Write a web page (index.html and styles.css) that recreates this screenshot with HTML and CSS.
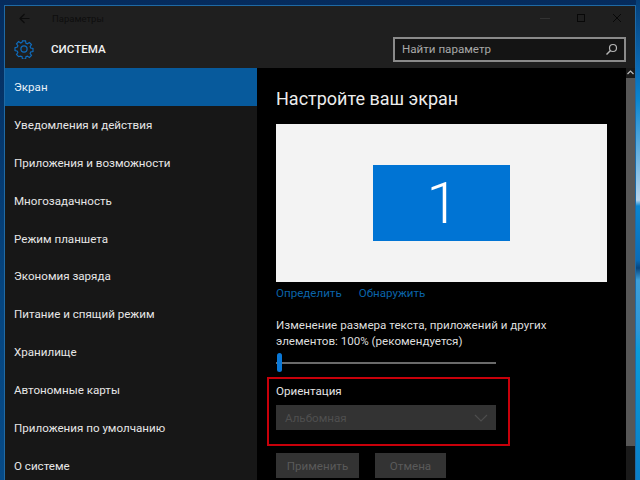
FILE: index.html
```html
<!DOCTYPE html>
<html lang="ru">
<head>
<meta charset="utf-8">
<title>Параметры</title>
<link rel="stylesheet" href="styles.css">
</head>
<body>
<div class="window">
  <div class="titlebar">
    <svg class="back" width="11" height="11" viewBox="0 0 11 11"><path d="M10.500 5.500H1M5.500 1 1 5.500 5.500 10" fill="none" stroke="#0c0c0c" stroke-width="1.200"/></svg>
    <span class="title">Параметры</span>
    <div class="controls">
      <svg width="10" height="10" viewBox="0 0 10 10"><path d="M0 5.500h10" stroke="#333" stroke-width="1"/></svg>
      <svg width="10" height="10" viewBox="0 0 10 10"><rect x="1.500" y="1.500" width="7" height="7" fill="none" stroke="#080808" stroke-width="1"/></svg>
      <svg width="10" height="10" viewBox="0 0 10 10"><path d="M1 1l8 8M9 1l-8 8" stroke="#080808" stroke-width="1"/></svg>
    </div>
  </div>
  <div class="header">
    <svg class="gear" width="20" height="20" viewBox="0 0 20 20"><path d="M8.300 1h3.400l.5 2.700 1.500.7 2.300-1.500 2.300 2.400-1.500 2.200.6 1.500 2.600.6v3.300l-2.600.6-.6 1.500 1.500 2.200-2.300 2.300-2.300-1.500-1.500.7-.5 2.700H8.300l-.5-2.700-1.500-.7L4 18.500l-2.300-2.300 1.500-2.200-.6-1.500L0 11.900V8.600l2.600-.6.6-1.500-1.500-2.200L4 1.900l2.300 1.500 1.500-.7z" transform="translate(1 .9) scale(.9)" fill="none" stroke="#0f6cbd" stroke-width="1.300"/><circle cx="10" cy="10" r="3.100" fill="none" stroke="#0f6cbd" stroke-width="1.200"/></svg>
    <span class="heading">СИСТЕМА</span>
    <div class="search">
      <span>Найти параметр</span>
      <svg width="13" height="13" viewBox="0 0 13 13"><circle cx="8" cy="5" r="3.500" fill="none" stroke="#b5b5b5" stroke-width="1.200"/><path d="M5.500 7.500 1.500 11.500" stroke="#b5b5b5" stroke-width="1.400"/></svg>
    </div>
  </div>
  <div class="body">
    <nav class="sidebar">
      <a class="item active">Экран</a>
      <a class="item">Уведомления и действия</a>
      <a class="item">Приложения и возможности</a>
      <a class="item">Многозадачность</a>
      <a class="item">Режим планшета</a>
      <a class="item">Экономия заряда</a>
      <a class="item">Питание и спящий режим</a>
      <a class="item">Хранилище</a>
      <a class="item">Автономные карты</a>
      <a class="item">Приложения по умолчанию</a>
      <a class="item">О системе</a>
    </nav>
    <main class="content">
      <h1>Настройте ваш экран</h1>
      <div class="preview"><div class="monitor">1</div></div>
      <div class="links"><a>Определить</a><a>Обнаружить</a></div>
      <p class="scale">Изменение размера текста, приложений и других элементов: 100% (рекомендуется)</p>
      <div class="slider"><span class="thumb"></span></div>
      <div class="orientation">
        <div class="label">Ориентация</div>
        <div class="select">
          <span>Альбомная</span>
          <svg width="14" height="8" viewBox="0 0 14 8"><path d="M1 1l6 6 6-6" fill="none" stroke="#4d4d4d" stroke-width="1.200"/></svg>
        </div>
      </div>
      <div class="buttons"><span class="btn apply">Применить</span><span class="btn cancel">Отмена</span></div>
    </main>
    <div class="scrollbar">
      <svg width="9" height="10" viewBox="0 0 9 10"><path d="M1.500 6 4.500 3l3 3" fill="none" stroke="#bdbdbd" stroke-width="1.200"/></svg>
      <div class="scroll-thumb"></div>
    </div>
  </div>
</div>
</body>
</html>
```
FILE: styles.css
```css
* { box-sizing: border-box; }
html, body { margin: 0; height: 480px; overflow: hidden; }
body {
  padding: 5px 4px 0 4px;
  font-family: Roboto, "Noto Sans", sans-serif;
  background:
    linear-gradient(180deg, #063f78 0, #0a6cb8 70px, #0a86d0 100px, #b8d4ea 200px, #0a86d0 206px, #0a6cb8 260px, #07457e 268px, #3d9fd8 280px, #2d96d6 330px, #0a9bd8 350px, #0a7ec8 480px) right top / 4px 100% no-repeat,
    linear-gradient(180deg, #052b5c 0, #06457f 300px, #074a86 480px);
  background-color: #063a70;
}
.window {
  width: 632px;
  height: 490px;
  border: 1px solid #1f6aa5;
  background: #1a1a1a;
  display: flex;
  flex-direction: column;
}
.titlebar {
  height: 24px;
  flex: none;
  display: flex;
  align-items: center;
  padding-left: 14px;
  background: #1f1f1f;
}
.title { margin-left: 22px; font-size: 9.500px; color: #0e0e0e; }
.controls { margin-left: auto; display: flex; gap: 26px; padding-right: 13px; }
.header {
  height: 38px;
  flex: none;
  display: flex;
  align-items: center;
  padding: 0 9px 0 9px;
  background: #1f1f1f;
}
.heading { margin-left: 17px; font-size: 11.600px; font-weight: 500; color: #f2f2f2; }
.search {
  margin-left: auto;
  width: 233px;
  height: 25px;
  border: 2px solid #8a8a8a;
  background: #141414;
  display: flex;
  align-items: center;
  justify-content: space-between;
  padding: 0 6px 0 7px;
  font-size: 11.600px;
  color: #a8a8a8;
}
.body { flex: 1; display: flex; min-height: 0; }
.sidebar { width: 252px; flex: none; background: #171717; }
.item {
  display: flex;
  align-items: center;
  height: 37.900px;
  padding-left: 9px;
  font-size: 11.600px;
  color: #e6e6e6;
}
.active { background: #075a9c; color: #e8f0f7; }
.content { flex: 1; min-width: 0; background: #000; padding: 0 0 0 19px; }
h1 {
  margin: 19px 0 0;
  font-size: 18px;
  font-weight: 400;
  line-height: 23px;
  color: #ececec;
}
.preview {
  margin-top: 14px;
  width: 331px;
  height: 158px;
  background: #f3f3f3;
  display: flex;
  align-items: center;
  justify-content: center;
}
.monitor {
  width: 137px;
  height: 76px;
  margin-bottom: 1px;
  padding-left: 2px;
  background: #0074d4;
  color: #fff;
  display: flex;
  align-items: center;
  justify-content: center;
  font-family: Roboto, sans-serif;
  font-weight: 300;
  font-size: 58px;
}
.links { display: flex; gap: 17px; margin-top: 2px; height: 18px; line-height: 18px; font-size: 11.600px; color: #0a63a8; }
.scale { margin: 15px 0 0; width: 280px; font-size: 11.600px; line-height: 16px; color: #dedede; }
.slider { position: relative; margin-top: 13px; width: 220px; height: 2px; background: #6a6a6a; }
.thumb { position: absolute; left: 1px; top: -9px; width: 5px; height: 19px; border-radius: 3px; background: #0a78d7; }
.orientation {
  margin: 13px 0 0 -9px;
  width: 243px;
  height: 69px;
  border: 2px solid #c8000a;
  padding: 4px 0 0 7px;
}
.label { font-size: 11.600px; line-height: 16px; color: #e4e4e4; }
.select {
  margin-top: 6px;
  width: 220px;
  height: 25px;
  background: #333;
  display: flex;
  align-items: center;
  justify-content: space-between;
  padding: 0 8px 0 9px;
  font-size: 11.600px;
  color: #4f4f4f;
}
.buttons { display: flex; gap: 16px; margin-top: 7px; }
.btn { height: 25px; display: flex; align-items: center; justify-content: center; background: #333; font-size: 11.600px; color: #5a5a5a; }
.apply { width: 83px; }
.cancel { width: 71px; }
.scrollbar { width: 9px; flex: none; background: #1a1a1a; }
.scrollbar svg { display: block; }
.scroll-thumb { width: 9px; height: 368px; background: #575757; }
```
